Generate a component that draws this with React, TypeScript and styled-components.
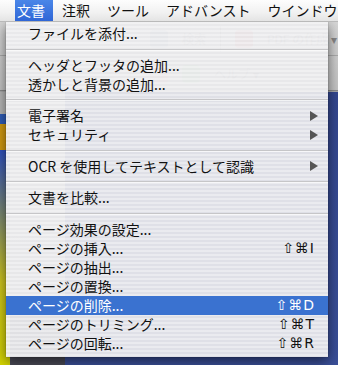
import React from "react";
import styled, { createGlobalStyle } from "styled-components";

const GlobalStyle = createGlobalStyle`
  html, body { margin: 0; padding: 0; }
  body {
    width: 338px;
    height: 365px;
    overflow: hidden;
    font-family: "Noto Sans CJK JP", "DejaVu Sans", sans-serif;
    -webkit-font-smoothing: antialiased;
  }
`;

const JP = `"Noto Sans CJK JP", "Noto Sans", sans-serif`;

const Desktop = styled.div`
  position: relative;
  width: 338px;
  height: 365px;
  overflow: hidden;
  display: flex;
  flex-direction: column;
  background: #384c94;
`;

const MenuBar = styled.div`
  height: 22px;
  display: flex;
  align-items: stretch;
  padding-left: 15px;
  gap: 7px;
  background: linear-gradient(#fdfdfd, #f1f1f1 60%, #e4e4e4);
  border-bottom: 1px solid #b9b9b9;
  box-sizing: border-box;
  font-family: ${JP};
  font-size: 14px;
  color: #111;
  white-space: nowrap;
  position: relative;
  z-index: 2;
`;

const BarItem = styled.div<{ $active?: boolean }>`
  padding: 0 8px 0 2px;
  line-height: 21px;
  color: ${(p) => (p.$active ? "#fff" : "#111")};
  background: ${(p) => (p.$active ? "linear-gradient(#4a86e8, #2f66d6)" : "transparent")};
`;

/* window behind the menu: toolbar rows, then side column + desktop */
const Backdrop = styled.div`
  flex: 1;
  display: grid;
  grid-template-rows: 70px 1fr;
`;

const Toolbar = styled.div`
  background: linear-gradient(#d6d6d6, #c4c4c4);
  display: grid;
  grid-template-rows: 34px 36px;
  border-bottom: 2px solid #8a8a8a;
`;

const ToolRow = styled.div`
  display: flex;
  align-items: center;
  gap: 14px;
  padding-left: 150px;
  font-family: ${JP};
  font-size: 12px;
  color: #888;
  border-bottom: 1px solid #aaa;
`;

const ToolIcon = styled.div<{ $color: string }>`
  width: 18px;
  height: 18px;
  border-radius: 4px;
  background: ${(p) => p.$color};
`;

const ToolDivider = styled.div`
  width: 1px;
  height: 26px;
  background: #999;
`;

const Lower = styled.div`
  display: grid;
  grid-template-columns: 10px 55px 1fr;
`;

const YellowEdge = styled.div`
  background: linear-gradient(
    #b8b8b8 0 22px,
    #2f5cb8 22px 32px,
    #d29a10 32px 58px,
    #2c4fc0 58px,
    #cfc61c 190px,
    #d4d400
  );
`;

const SideColumn = styled.div`
  background: linear-gradient(#cfcfcf, #b8b8b8 80%, #4a4a56 80%);
`;

const Blue = styled.div`
  background: linear-gradient(#34478f, #3a4f98);
`;

const Menu = styled.div`
  position: absolute;
  left: 6px;
  top: 22px;
  width: 322px;
  padding: 2px 0 4px;
  box-sizing: border-box;
  background:
    repeating-linear-gradient(180deg, rgba(255, 255, 255, 0.35) 0 2px, rgba(0, 0, 0, 0) 2px 4px),
    rgba(234, 234, 236, 0.94);
  box-shadow: 0 4px 12px rgba(0, 0, 0, 0.55), 0 0 1px rgba(0, 0, 0, 0.4);
  z-index: 1;
  font-family: ${JP};
  font-size: 14px;
  color: #111;
`;

const Item = styled.div<{ $selected?: boolean }>`
  height: 19px;
  line-height: 19px;
  display: flex;
  align-items: center;
  padding: 0 13px 0 22px;
  white-space: nowrap;
  color: ${(p) => (p.$selected ? "#fff" : "#111")};
  background: ${(p) => (p.$selected ? "#3a72d0" : "transparent")};
`;

const Label = styled.span`
  flex: 1;
`;

const Shortcut = styled.span`
  font-family: "DejaVu Sans", sans-serif;
  font-size: 14px;
  letter-spacing: 1px;
`;

const Arrow = styled.span`
  width: 0;
  height: 0;
  margin-right: -3px;
  border-top: 5px solid transparent;
  border-bottom: 5px solid transparent;
  border-left: 8px solid #555;
`;

const Separator = styled.div`
  height: 12.5px;
  display: flex;
  align-items: center;
  &::after {
    content: "";
    flex: 1;
    height: 1px;
    background: #c6c6c8;
    box-shadow: 0 1px 0 rgba(255, 255, 255, 0.6);
  }
`;

type Entry =
  | { kind: "item"; label: string; shortcut?: string; submenu?: boolean; selected?: boolean }
  | { kind: "sep" };

const entries: Entry[] = [
  { kind: "item", label: "ファイルを添付..." },
  { kind: "sep" },
  { kind: "item", label: "ヘッダとフッタの追加..." },
  { kind: "item", label: "透かしと背景の追加..." },
  { kind: "sep" },
  { kind: "item", label: "電子署名", submenu: true },
  { kind: "item", label: "セキュリティ", submenu: true },
  { kind: "sep" },
  { kind: "item", label: "OCR を使用してテキストとして認識", submenu: true },
  { kind: "sep" },
  { kind: "item", label: "文書を比較..." },
  { kind: "sep" },
  { kind: "item", label: "ページ効果の設定..." },
  { kind: "item", label: "ページの挿入...", shortcut: "⇧⌘I" },
  { kind: "item", label: "ページの抽出..." },
  { kind: "item", label: "ページの置換..." },
  { kind: "item", label: "ページの削除...", shortcut: "⇧⌘D", selected: true },
  { kind: "item", label: "ページのトリミング...", shortcut: "⇧⌘T" },
  { kind: "item", label: "ページの回転...", shortcut: "⇧⌘R" },
];

const barItems = ["文書", "注釈", "ツール", "アドバンスト", "ウインドウ"];

export default function App() {
  return (
    <>
      <GlobalStyle />
      <Desktop>
        <MenuBar>
          {barItems.map((name, i) => (
            <BarItem key={name} $active={i === 0}>
              {name}
            </BarItem>
          ))}
        </MenuBar>
        <Backdrop>
          <Toolbar>
            <ToolRow>
              <ToolIcon $color="#9aa4b8" />
              <span>検索</span>
              <ToolDivider />
              <ToolIcon $color="#d88" />
              <span>PDF の作成 ▾</span>
            </ToolRow>
            <ToolRow>
              <ToolIcon $color="#d9a0a0" />
              <ToolIcon $color="#9c9" />
              <span>ヘルプ ▾</span>
            </ToolRow>
          </Toolbar>
          <Lower>
            <YellowEdge />
            <SideColumn />
            <Blue />
          </Lower>
        </Backdrop>
        <Menu>
          {entries.map((e, i) =>
            e.kind === "sep" ? (
              <Separator key={i} />
            ) : (
              <Item key={i} $selected={e.selected}>
                <Label>{e.label}</Label>
                {e.shortcut && <Shortcut>{e.shortcut}</Shortcut>}
                {e.submenu && <Arrow />}
              </Item>
            )
          )}
        </Menu>
      </Desktop>
    </>
  );
}
